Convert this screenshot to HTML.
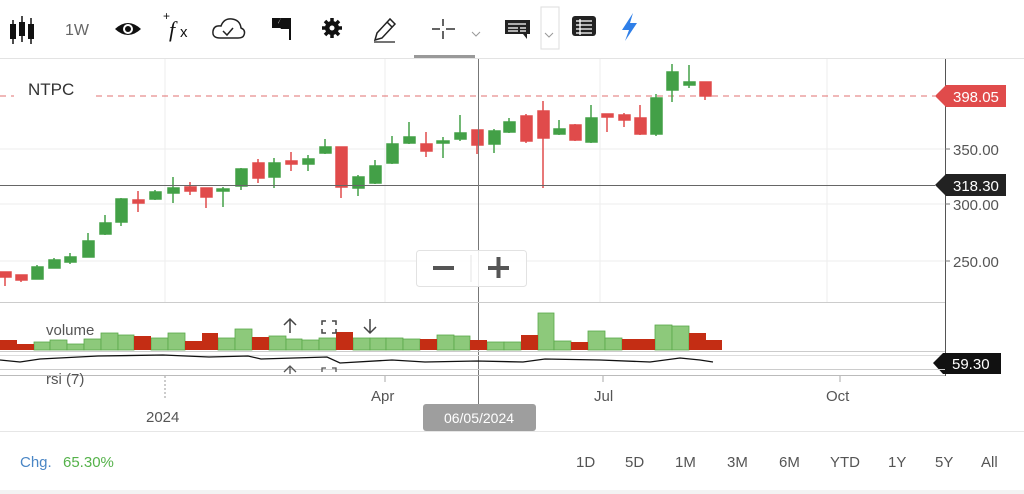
<!DOCTYPE html>
<html><head><meta charset="utf-8"><style>
body{margin:0;width:1024px;height:494px;overflow:hidden;background:#fff;font-family:"Liberation Sans",sans-serif;}
svg{position:absolute;left:0;top:0}
</style></head><body>
<svg width="1024" height="494" viewBox="0 0 1024 494" font-family="Liberation Sans, sans-serif">
<!-- toolbar -->
<g fill="#111" stroke="#111">
 <line x1="13" y1="20" x2="13" y2="44" stroke-width="1.5"/><rect x="10" y="24" width="6" height="15" stroke="none"/>
 <line x1="22" y1="16" x2="22" y2="42" stroke-width="1.5"/><rect x="19" y="22" width="6" height="14" stroke="none"/>
 <line x1="31" y1="18" x2="31" y2="44" stroke-width="1.5"/><rect x="28" y="24" width="6" height="15" stroke="none"/>
</g>
<text x="65" y="35" font-size="16" fill="#666">1W</text>
<path d="M115 29 Q128 17 141 29 Q128 41 115 29Z" fill="#111"/><circle cx="128" cy="29" r="5" fill="#fff"/><circle cx="128" cy="29" r="3" fill="#111"/>
<text x="163" y="20" font-size="12" fill="#111">+</text><text x="169" y="37" font-size="22" font-style="italic" font-family="Liberation Serif,serif" fill="#111">f</text><text x="180" y="37" font-size="15" fill="#111">x</text>
<path d="M220 38 Q212 38 213 31 Q214 25 221 26 Q224 18 232 19 Q240 20 241 28 Q246 30 244 35 Q243 38 238 38Z" fill="none" stroke="#222" stroke-width="1.5"/><path d="M223 31 l4 4 l6 -7" fill="none" stroke="#222" stroke-width="1.5"/>
<path d="M272 18 h9 l-3 5 l3 5 h-9z" fill="#111"/><line x1="290" y1="18" x2="290" y2="40" stroke="#111" stroke-width="2"/><path d="M281 18 h9 v11 h-9 l-3 -5z" fill="#111"/>
<g transform="translate(332 28)"><circle r="7" fill="#111"/><g stroke="#111" stroke-width="3.5"><line x1="0" y1="-10" x2="0" y2="10"/><line x1="-10" y1="0" x2="10" y2="0"/><line x1="-7" y1="-7" x2="7" y2="7"/><line x1="-7" y1="7" x2="7" y2="-7"/></g><circle r="2.5" fill="#fff"/></g>
<path d="M375 40 l2 -7 l13 -14 l5 5 l-13 14z M387 22 l5 5" fill="none" stroke="#222" stroke-width="1.5"/><line x1="374" y1="42" x2="395" y2="42" stroke="#222" stroke-width="1.2"/>
<g stroke="#222" stroke-width="1.4"><line x1="443" y1="19" x2="443" y2="26"/><line x1="443" y1="31" x2="443" y2="39"/><line x1="432" y1="29" x2="440" y2="29"/><line x1="446" y1="29" x2="455" y2="29"/></g>
<path d="M472 32 l4 4 l4 -4" fill="none" stroke="#999" stroke-width="1"/>
<rect x="414" y="55" width="61" height="4" fill="#999"/>
<path d="M505 20 h25 v14 h-3 v5 l-4 -5 h-18z" fill="#222"/><g stroke="#fff" stroke-width="1.3"><line x1="508" y1="24" x2="526" y2="24"/><line x1="508" y1="28" x2="518" y2="28"/><line x1="508" y1="31" x2="518" y2="31"/><line x1="520" y1="28" x2="526" y2="28"/><line x1="520" y1="31" x2="526" y2="31"/></g>
<rect x="541" y="7" width="18" height="42" fill="none" stroke="#ddd"/><path d="M545 33 l4 4 l4 -4" fill="none" stroke="#999" stroke-width="1"/>
<rect x="572" y="16" width="24" height="20" rx="3" fill="#222"/><g stroke="#fff" stroke-width="1.3"><line x1="576" y1="21" x2="592" y2="21"/><line x1="576" y1="25" x2="592" y2="25"/><line x1="576" y1="29" x2="592" y2="29"/><line x1="576" y1="33" x2="592" y2="33"/><line x1="580" y1="19" x2="580" y2="35"/></g>
<path d="M633 13 l-11 17 h7 l-4 11 l12 -18 h-7z" fill="#2f7fe8"/>
<line x1="0" y1="58.5" x2="1024" y2="58.5" stroke="#e3e3e3"/>
<!-- grid -->
<g stroke="#eee"><line x1="0" y1="149" x2="945" y2="149"/><line x1="0" y1="204" x2="945" y2="204"/><line x1="0" y1="261" x2="945" y2="261"/>
<line x1="165" y1="59" x2="165" y2="302"/><line x1="385" y1="59" x2="385" y2="302"/><line x1="600" y1="59" x2="600" y2="302"/><line x1="827" y1="59" x2="827" y2="302"/></g>
<line x1="945.5" y1="59" x2="945.5" y2="376" stroke="#555"/>
<g fill="#555" font-size="15"><text x="953" y="155">350.00</text><text x="953" y="210">300.00</text><text x="953" y="267">250.00</text></g>
<g stroke="#777"><line x1="945" y1="149" x2="950" y2="149"/><line x1="945" y1="204" x2="950" y2="204"/><line x1="945" y1="261" x2="950" y2="261"/></g>
<text x="28" y="95" font-size="17" fill="#333">NTPC</text>
<line x1="0" y1="96" x2="14" y2="96" stroke="#e07070" stroke-dasharray="6,5"/>
<line x1="96" y1="96" x2="935" y2="96" stroke="#e07070" stroke-dasharray="6,5"/>
<path d="M935 96 l11 -11 h60 v22 h-60z" fill="#e04b4b"/><text x="953" y="102" font-size="15" fill="#fff">398.05</text>
<!-- candles -->
<g stroke-width="1.5">
<g stroke="#e04b4b" fill="#e04b4b">
<line x1="5" y1="272" x2="5" y2="286"/><rect x="0" y="272" width="11" height="5"/>
<line x1="21" y1="275" x2="21" y2="282"/><rect x="16" y="275" width="11" height="5"/>
<line x1="138" y1="191" x2="138" y2="212"/><rect x="133" y="200" width="11" height="3"/>
<line x1="190" y1="182" x2="190" y2="195"/><rect x="185" y="187" width="11" height="4"/>
<line x1="206" y1="188" x2="206" y2="208"/><rect x="201" y="188" width="11" height="9"/>
<line x1="258" y1="159" x2="258" y2="183"/><rect x="253" y="163" width="11" height="15"/>
<line x1="291" y1="152" x2="291" y2="171"/><rect x="286" y="161" width="11" height="3"/>
<line x1="341" y1="147" x2="341" y2="198"/><rect x="336" y="147" width="11" height="40"/>
<line x1="426" y1="132" x2="426" y2="157"/><rect x="421" y="144" width="11" height="7"/>
<line x1="477" y1="130" x2="477" y2="154"/><rect x="472" y="130" width="11" height="15"/>
<line x1="526" y1="114" x2="526" y2="143"/><rect x="521" y="116" width="11" height="25"/>
<line x1="543" y1="101" x2="543" y2="188"/><rect x="538" y="111" width="11" height="27"/>
<line x1="575" y1="124" x2="575" y2="141"/><rect x="570" y="125" width="11" height="15"/>
<line x1="607" y1="114" x2="607" y2="132"/><rect x="602" y="114" width="11" height="3"/>
<line x1="624" y1="113" x2="624" y2="127"/><rect x="619" y="115" width="11" height="5"/>
<line x1="640" y1="105" x2="640" y2="135"/><rect x="635" y="118" width="11" height="16"/>
<line x1="705" y1="82" x2="705" y2="100"/><rect x="710" y="82" width="0" height="0"/><rect x="710" y="82" width="0" height="0"/><rect x="710" y="82" width="0" height="0"/><rect x="710" y="82" width="0" height="0"/><rect x="710" y="82" width="0" height="0"/><rect x="709" y="82" width="11" height="14" transform="translate(-9 0)"/>
</g>
<g stroke="#43a047" fill="#43a047">
<line x1="37" y1="265" x2="37" y2="279"/><rect x="32" y="267" width="11" height="12"/>
<line x1="54" y1="258" x2="54" y2="268"/><rect x="49" y="260" width="11" height="8"/>
<line x1="70" y1="253" x2="70" y2="264"/><rect x="65" y="257" width="11" height="5"/>
<line x1="88" y1="233" x2="88" y2="257"/><rect x="83" y="241" width="11" height="16"/>
<line x1="105" y1="215" x2="105" y2="235"/><rect x="100" y="223" width="11" height="11"/>
<line x1="121" y1="198" x2="121" y2="226"/><rect x="116" y="199" width="11" height="23"/>
<line x1="155" y1="190" x2="155" y2="200"/><rect x="150" y="192" width="11" height="7"/>
<line x1="173" y1="177" x2="173" y2="203"/><rect x="168" y="188" width="11" height="5"/>
<line x1="223" y1="187" x2="223" y2="207"/><rect x="217" y="189" width="12" height="2"/>
<line x1="241" y1="168" x2="241" y2="190"/><rect x="236" y="169" width="11" height="17"/>
<line x1="274" y1="158" x2="274" y2="188"/><rect x="269" y="163" width="11" height="14"/>
<line x1="308" y1="155" x2="308" y2="171"/><rect x="303" y="159" width="11" height="5"/>
<line x1="325" y1="139" x2="325" y2="154"/><rect x="320" y="147" width="11" height="6"/>
<line x1="358" y1="175" x2="358" y2="196"/><rect x="353" y="177" width="11" height="11"/>
<line x1="375" y1="160" x2="375" y2="184"/><rect x="370" y="166" width="11" height="17"/>
<line x1="392" y1="136" x2="392" y2="164"/><rect x="387" y="144" width="11" height="19"/>
<line x1="409" y1="122" x2="409" y2="144"/><rect x="404" y="137" width="11" height="6"/>
<line x1="443" y1="137" x2="443" y2="158"/><rect x="437" y="141" width="12" height="2"/>
<line x1="460" y1="115" x2="460" y2="141"/><rect x="455" y="133" width="11" height="6"/>
<line x1="494" y1="129" x2="494" y2="153"/><rect x="489" y="131" width="11" height="13"/>
<line x1="509" y1="118" x2="509" y2="133"/><rect x="504" y="122" width="11" height="10"/>
<line x1="559" y1="120" x2="559" y2="135"/><rect x="554" y="129" width="11" height="5"/>
<line x1="591" y1="105" x2="591" y2="143"/><rect x="586" y="118" width="11" height="24"/>
<line x1="656" y1="94" x2="656" y2="136"/><rect x="651" y="98" width="11" height="36"/>
<line x1="672" y1="64" x2="672" y2="102"/><rect x="667" y="72" width="11" height="18"/>
<line x1="689" y1="65" x2="689" y2="88"/><rect x="684" y="82" width="11" height="3"/>
</g></g>
<!-- crosshair -->
<line x1="0" y1="185.5" x2="935" y2="185.5" stroke="#666"/>
<path d="M935 185 l11 -11 h60 v22 h-60z" fill="#222"/><text x="953" y="191" font-size="15" fill="#fff">318.30</text>
<line x1="478.5" y1="59" x2="478.5" y2="404" stroke="#777"/>
<!-- zoom buttons -->
<rect x="416.5" y="250.5" width="110" height="36" rx="3" fill="#fff" fill-opacity="0.85" stroke="#e2e2e2"/>
<line x1="471" y1="255" x2="471" y2="282" stroke="#e4e4e4"/>
<rect x="433" y="266" width="21" height="4" fill="#555"/>
<rect x="488" y="266" width="21" height="4" fill="#555"/><rect x="496.5" y="257" width="4" height="21" fill="#555"/>
<!-- panels -->
<line x1="0" y1="302.5" x2="945" y2="302.5" stroke="#ccc"/>
<text x="46" y="335" font-size="15" fill="#555">volume</text>
<g fill="#8dc97b" stroke="#5aa84a" stroke-width="0.8">
<rect x="34" y="342" width="16" height="8"/><rect x="50" y="340" width="17" height="10"/><rect x="67" y="344" width="17" height="6"/><rect x="84" y="339" width="17" height="11"/><rect x="101" y="333" width="17" height="17"/><rect x="118" y="335" width="16" height="15"/>
<rect x="151" y="338" width="17" height="12"/><rect x="168" y="333" width="17" height="17"/><rect x="218" y="338" width="17" height="12"/><rect x="235" y="329" width="17" height="21"/>
<rect x="269" y="336" width="17" height="14"/><rect x="286" y="339" width="16" height="11"/><rect x="302" y="340" width="17" height="10"/><rect x="319" y="338" width="17" height="12"/>
<rect x="353" y="338" width="17" height="12"/><rect x="370" y="338" width="16" height="12"/><rect x="386" y="338" width="17" height="12"/><rect x="403" y="339" width="17" height="11"/>
<rect x="437" y="335" width="17" height="15"/><rect x="454" y="336" width="16" height="14"/><rect x="487" y="342" width="17" height="8"/><rect x="504" y="342" width="17" height="8"/>
<rect x="538" y="313" width="16" height="37"/><rect x="554" y="341" width="17" height="9"/><rect x="588" y="331" width="17" height="19"/><rect x="605" y="338" width="17" height="12"/>
<rect x="655" y="325" width="17" height="25"/><rect x="672" y="326" width="17" height="24"/>
</g>
<g fill="#c42d14">
<rect x="0" y="340" width="17" height="10"/><rect x="17" y="344" width="17" height="6"/><rect x="134" y="336" width="17" height="14"/><rect x="185" y="341" width="17" height="9"/><rect x="202" y="333" width="16" height="17"/><rect x="252" y="337" width="17" height="13"/>
<rect x="336" y="332" width="17" height="18"/><rect x="420" y="339" width="17" height="11"/><rect x="470" y="340" width="17" height="10"/><rect x="521" y="335" width="17" height="15"/><rect x="571" y="342" width="17" height="8"/><rect x="622" y="339" width="16" height="11"/><rect x="638" y="339" width="17" height="11"/><rect x="689" y="333" width="17" height="17"/><rect x="706" y="340" width="16" height="10"/>
</g>
<g fill="none" stroke="#444" stroke-width="1.5"><path d="M290 333 v-14 M284 325 l6 -6 l6 6 M370 319 v14 M364 327 l6 6 l6 -6"/><path d="M322 325 v-4 h4 M332 321 h4 v4 M336 329 v4 h-4 M326 333 h-4 v-4"/></g>
<line x1="0" y1="351.5" x2="945" y2="351.5" stroke="#ccc"/>
<line x1="0" y1="355.5" x2="945" y2="355.5" stroke="#ddd"/>
<path d="M0 360 L20 362 L40 359 L98 356 L163 355 L209 357 L248 356 L261 359 L327 357 L340 363 L392 360 L425 362 L477 361 L523 362 L545 359 L600 360 L650 362 L680 358 L700 360 L713 362" fill="none" stroke="#111" stroke-width="1.3"/>
<path d="M933 363 l10 -10 h58 v21 h-58z" fill="#111"/><text x="952" y="369" font-size="15" fill="#fff">59.30</text>
<line x1="0" y1="369.5" x2="945" y2="369.5" stroke="#ccc"/>
<line x1="0" y1="375.5" x2="945" y2="375.5" stroke="#bbb"/>
<text x="46" y="384" font-size="15" fill="#555">rsi (7)</text>
<g fill="none" stroke="#555" stroke-width="1.3"><path d="M284 372 l6 -6 l6 6 M290 366 v8"/><path d="M322 372 v-4 h4 M332 368 h4 v4"/></g>
<!-- x axis -->
<line x1="165" y1="376" x2="165" y2="398" stroke="#999" stroke-dasharray="2,2"/>
<g stroke="#aaa"><line x1="385" y1="376" x2="385" y2="382"/><line x1="603" y1="376" x2="603" y2="382"/><line x1="840" y1="376" x2="840" y2="382"/></g>
<g fill="#555" font-size="15"><text x="371" y="401">Apr</text><text x="594" y="401">Jul</text><text x="826" y="401">Oct</text><text x="146" y="422">2024</text></g>
<rect x="423" y="404" width="113" height="27" rx="3" fill="#9e9e9e"/><text x="479" y="423" font-size="14" fill="#fff" text-anchor="middle">06/05/2024</text>
<line x1="0" y1="431.5" x2="1024" y2="431.5" stroke="#e6e6e6"/>
<!-- bottom -->
<text x="20" y="467" font-size="15" fill="#4a86c5">Chg.</text><text x="63" y="467" font-size="15" fill="#55b24a">65.30%</text>
<g fill="#555" font-size="15"><text x="576" y="467">1D</text><text x="625" y="467">5D</text><text x="675" y="467">1M</text><text x="727" y="467">3M</text><text x="779" y="467">6M</text><text x="830" y="467">YTD</text><text x="888" y="467">1Y</text><text x="935" y="467">5Y</text><text x="981" y="467">All</text></g>
<rect x="0" y="490" width="1024" height="4" fill="#f3f3f3"/>
</svg>
</body></html>
